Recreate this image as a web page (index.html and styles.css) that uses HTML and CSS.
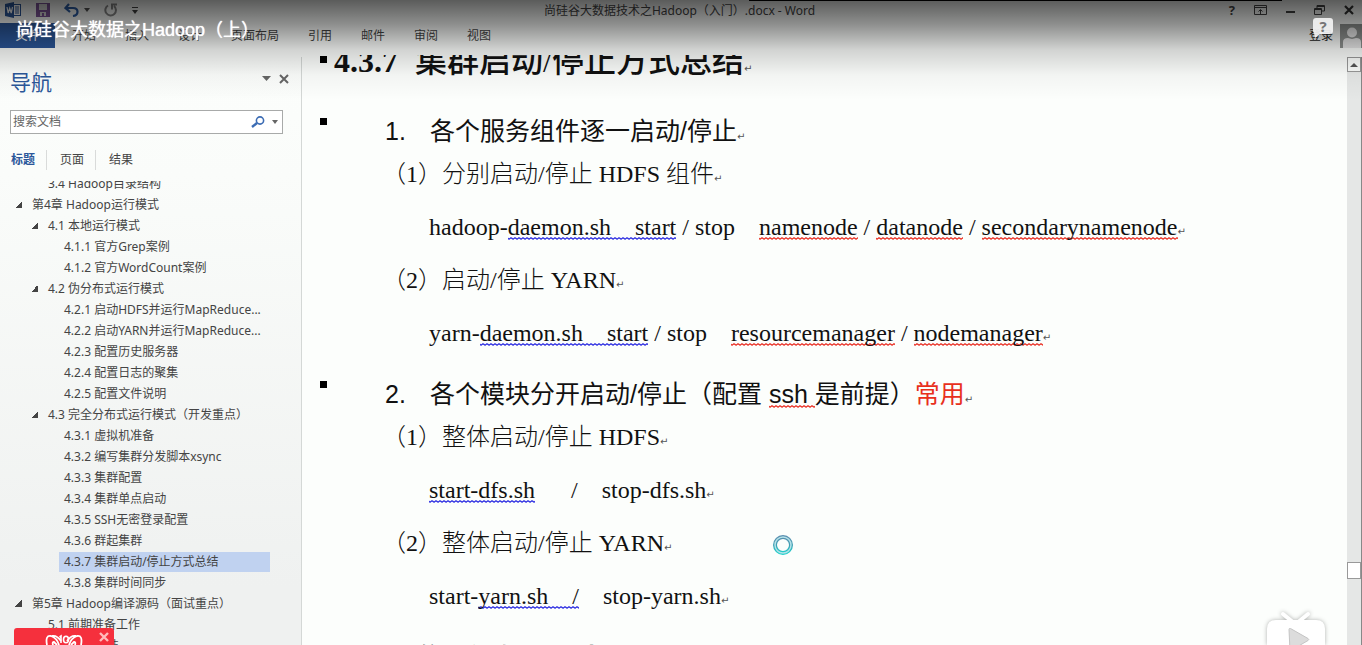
FILE: index.html
```html
<!DOCTYPE html>
<html lang="zh-CN">
<head>
<meta charset="utf-8">
<title>尚硅谷大数据之Hadoop（上）</title>
<link rel="stylesheet" href="styles.css">
</head>
<body>
<div class="player">
  <header class="titlebar">
    <div class="quick">
      <svg class="ic-word" width="17" height="16" viewBox="0 0 17 16"><rect x="8" y="2.500" width="7.500" height="11" fill="#fff" stroke="#2b579a"/><path d="M10 5h4M10 7h4M10 9h4M10 11h4" stroke="#2b579a"/><path d="M0 2l9-2v16l-9-2z" fill="#2b579a"/><path d="M2 5l1.200 6L4.700 6l1.500 5L7.500 5" fill="none" stroke="#fff" stroke-width="1.200"/></svg>
      <button class="plain" aria-label="保存"><svg width="14" height="14" viewBox="0 0 14 14"><path d="M0 0h14v14H0z" fill="#80579b"/><path d="M3 1h8v6H3zM4 9h6v4H8v-3H6v3H4z" fill="#d8d8d8"/></svg></button>
      <button class="plain undo" aria-label="撤消"><svg width="15" height="14" viewBox="0 0 15 14"><path d="M5 1L1.500 5L6 9M2 5h7c6 0 6 7 0 8" fill="none" stroke="#2f5fa5" stroke-width="2.200"/></svg><svg width="6" height="4" viewBox="0 0 6 4"><path d="M0 0h6L3 4z" fill="#555"/></svg></button>
      <button class="plain" aria-label="重复"><svg width="14" height="14" viewBox="0 0 14 14"><path d="M4 2.500a5.300 5.300 0 1 0 6 .500M8 6.500V1.500h5" fill="none" stroke="#8a8a8a" stroke-width="2"/></svg></button>
      <button class="plain" aria-label="自定义"><svg width="6" height="7" viewBox="0 0 6 7"><path d="M0 0h6v1H0zM0 3h6L3 7z" fill="#444"/></svg></button>
    </div>
    <h1 class="doc-name">尚硅谷大数据技术之Hadoop（入门）.docx - Word</h1>
    <div class="window-buttons">
      <button class="plain help" aria-label="帮助">?</button>
      <button class="plain" aria-label="功能区"><svg width="13" height="10" viewBox="0 0 13 10"><path d="M.500.500h12v9H.500zM1 2.500h11M6.500 9V5M4.500 6.500l2-2 2 2" fill="none" stroke="#444"/></svg></button>
      <button class="plain" aria-label="最小化"><svg width="9" height="10" viewBox="0 0 9 10"><path d="M0 6h9v2H0z" fill="#444"/></svg></button>
      <button class="plain" aria-label="还原"><svg width="11" height="10" viewBox="0 0 11 10"><path d="M3 3V.500h7.500V6H8M.500 3.500h7v6h-7zM0 4.500h8M3 1.500h8" fill="none" stroke="#444"/></svg></button>
      <button class="plain" aria-label="关闭"><svg width="10" height="10" viewBox="0 0 10 10"><path d="M1 1l8 8M9 1L1 9" stroke="#333" stroke-width="2.200"/></svg></button>
    </div>
  </header>

  <div class="ribbon">
    <button class="file">文件</button>
    <div class="ribbon-tabs">
      <button>开始</button><button>插入</button><button>设计</button><button>页面布局</button><button>引用</button><button>邮件</button><button>审阅</button><button>视图</button>
    </div>
    <a class="login" href="#">登录</a>
    <svg class="avatar" width="22" height="24" viewBox="0 0 22 24"><path d="M0 0h22v24H0z" fill="#8e918f"/><circle cx="12" cy="8.500" r="5" fill="#e8e8e8"/><path d="M3 24v-6q0-4 5-4l4 1 4-1q5 0 5 4v6z" fill="#e8e8e8"/></svg>
  </div>

  <div class="workspace">
    <aside class="nav">
      <div class="nav-head">
        <h2>导航</h2>
        <button class="plain" aria-label="选项"><svg width="9" height="5" viewBox="0 0 9 5"><path d="M0 0h9L4.500 5z" fill="#666"/></svg></button>
        <button class="plain" aria-label="关闭导航"><svg width="10" height="10" viewBox="0 0 10 10"><path d="M1 1l8 8M9 1L1 9" stroke="#666" stroke-width="2"/></svg></button>
      </div>
      <div class="search">
        <input type="text" placeholder="搜索文档" aria-label="搜索文档">
        <button class="plain" aria-label="搜索"><svg width="14" height="12" viewBox="0 0 14 12"><circle cx="9" cy="4.500" r="3.600" fill="none" stroke="#3c6cb4" stroke-width="1.600"/><path d="M6 7L1 11" stroke="#3c6cb4" stroke-width="2.400"/></svg></button>
        <button class="plain" aria-label="搜索选项"><svg width="6" height="4" viewBox="0 0 6 4"><path d="M0 0h6L3 4z" fill="#666"/></svg></button>
      </div>
      <div class="nav-tabs">
        <button class="active">标题</button><button>页面</button><button>结果</button>
      </div>
      <div class="tree">
        <ul>
          <li class="l2"><a href="#">3.4 Hadoop目录结构</a></li>
          <li class="l1 open"><a href="#">第4章 Hadoop运行模式</a></li>
          <li class="l2 open"><a href="#">4.1 本地运行模式</a></li>
          <li class="l3"><a href="#">4.1.1 官方Grep案例</a></li>
          <li class="l3"><a href="#">4.1.2 官方WordCount案例</a></li>
          <li class="l2 open"><a href="#">4.2 伪分布式运行模式</a></li>
          <li class="l3"><a href="#">4.2.1 启动HDFS并运行MapReduce...</a></li>
          <li class="l3"><a href="#">4.2.2 启动YARN并运行MapReduce...</a></li>
          <li class="l3"><a href="#">4.2.3 配置历史服务器</a></li>
          <li class="l3"><a href="#">4.2.4 配置日志的聚集</a></li>
          <li class="l3"><a href="#">4.2.5 配置文件说明</a></li>
          <li class="l2 open"><a href="#">4.3 完全分布式运行模式（开发重点）</a></li>
          <li class="l3"><a href="#">4.3.1 虚拟机准备</a></li>
          <li class="l3"><a href="#">4.3.2 编写集群分发脚本xsync</a></li>
          <li class="l3"><a href="#">4.3.3 集群配置</a></li>
          <li class="l3"><a href="#">4.3.4 集群单点启动</a></li>
          <li class="l3"><a href="#">4.3.5 SSH无密登录配置</a></li>
          <li class="l3"><a href="#">4.3.6 群起集群</a></li>
          <li class="l3 current"><a href="#">4.3.7 集群启动/停止方式总结</a></li>
          <li class="l3"><a href="#">4.3.8 集群时间同步</a></li>
          <li class="l1 open"><a href="#">第5章 Hadoop编译源码（面试重点）</a></li>
          <li class="l2"><a href="#">5.1 前期准备工作</a></li>
          <li class="l2"><a href="#">5.2 jar包安装</a></li>
        </ul>
      </div>
    </aside>

    <main class="page">
      <div class="content">
        <h2 class="title"><span class="no">4.3.7</span><span class="name">集群启动/停止方式总结<i class="ret">↵</i></span></h2>
        <h3><span class="no">1.</span><span>各个服务组件逐一启动/停止<i class="ret">↵</i></span></h3>
        <p>（1）分别启动/停止 HDFS 组件<i class="ret">↵</i></p>
        <p class="cmd">hadoop-<u class="blue">daemon.sh    start</u> / stop    <u>namenode</u> / <u>datanode</u> / <u>secondarynamenode</u><i class="ret">↵</i></p>
        <p>（2）启动/停止 YARN<i class="ret">↵</i></p>
        <p class="cmd">yarn-<u class="blue">daemon.sh    start</u> / stop    <u>resourcemanager</u> / <u>nodemanager</u><i class="ret">↵</i></p>
        <h3><span class="no">2.</span><span>各个模块分开启动/停止（配置 <u>ssh </u>是前提）<em>常用</em><i class="ret">↵</i></span></h3>
        <p>（1）整体启动/停止 HDFS<i class="ret">↵</i></p>
        <p class="cmd"><u class="blue">start-dfs.sh</u>      /    stop-dfs.sh<i class="ret">↵</i></p>
        <p>（2）整体启动/停止 YARN<i class="ret">↵</i></p>
        <p class="cmd">start-<u class="blue">yarn.sh    /</u>    stop-yarn.sh<i class="ret">↵</i></p>
        <h2 class="title"><span class="no">4.3.8</span><span class="name">集群时间同步<i class="ret">↵</i></span></h2>
      </div>
      <svg class="busy" width="22" height="22" viewBox="0 0 22 22"><defs><linearGradient id="ring" x1="0" y1="0" x2="0" y2="1"><stop offset="0" stop-color="#5a8fb0"/><stop offset=".5" stop-color="#3f9fb4"/><stop offset="1" stop-color="#1fd0cb"/></linearGradient></defs><circle cx="11" cy="11" r="8" fill="none" stroke="url(#ring)" stroke-width="4"/><circle cx="11" cy="11" r="8" fill="none" stroke="#b4e2e8" stroke-width="1.500"/></svg>
    </main>

    <div class="scrollbar">
      <button class="up" aria-label="向上滚动"><svg width="8" height="4" viewBox="0 0 8 4"><path d="M4 0l4 4H0z" fill="#555"/></svg></button>
      <div class="before"></div>
      <div class="thumb"></div>
      <div class="after"></div>
    </div>
  </div>

  <div class="shade"></div>
  <div class="top-line"></div>
  <div class="video-title">尚硅谷大数据之Hadoop（上）</div>
  <button class="feedback" aria-label="反馈"><svg width="22" height="20" viewBox="0 0 22 20"><path d="M4 0h14q3 0 3 3v10q0 3-3 3H8l-5 4-1-5q-1-1-1-2V3q0-3 3-3z" fill="#f2f2f2" fill-opacity=".93"/></svg><span>?</span></button>
  <div class="promo">
    <svg width="40" height="17" viewBox="0 0 40 17"><path d="M3 17Q1 7 7 8q6 2 8 9M37 17q2-10-4-9-6 2-8 9M9 17q-1-3 1-3l3 3M31 17q1-3-1-3l-3 3M8 8q5-1 9 5M32 8q-5-1-9 5" fill="none" stroke="#fff" stroke-width="1.800"/><path d="M15.500 9l1.500-1v7" fill="none" stroke="#fff" stroke-width="1.600"/><ellipse cx="22" cy="11.500" rx="2.500" ry="3.300" fill="none" stroke="#fff" stroke-width="1.600"/></svg>
    <button class="plain" aria-label="关闭广告"><svg width="10" height="10" viewBox="0 0 10 10"><path d="M1 1l8 8M9 1L1 9" stroke="#fbb" stroke-width="2.400"/></svg></button>
  </div>
  <button class="play" aria-label="播放"><svg width="68" height="36" viewBox="0 0 68 36"><g fill="#fff"><path d="M21 5l11 9M46 5l-11 9" stroke="#fff" stroke-width="4" stroke-linecap="round"/><path d="M14 11h40q9 0 9 9v30H5V20q0-9 9-9z"/></g><path d="M27 20.500q0-1.500 1.500-1L46 29.500q1.500 1 0 2L28 42z" fill="#dcdcdc" stroke="#c4c4c4"/></svg></button>
</div>
</body>
</html>
```

FILE: styles.css
```css
* { box-sizing: border-box; }
body {
  margin: 0;
  font: 12px/20px "Noto Sans", "Noto Sans CJK SC", sans-serif;
  color: #444;
}
h1, h2, h3, p, ul { margin: 0; padding: 0; font-weight: normal; }
a { color: inherit; text-decoration: none; }
button { font: inherit; color: inherit; border: 0; padding: 0; background: none; }
svg { display: block; flex: none; }
.plain { display: flex; align-items: center; }

.player {
  position: relative;
  display: flex;
  flex-direction: column;
  height: 100vh;
  overflow: hidden;
  background: #fcfefc;
}

/* Title bar */
.titlebar {
  display: grid;
  grid-template-columns: 1fr auto 1fr;
  align-items: center;
  height: 23px;
  padding: 0 8px 4px 5px;
}
.quick { display: flex; align-items: center; gap: 14px; }
.undo { gap: 5px; }
.doc-name { font-size: 12px; line-height: 19px; }
.window-buttons { display: flex; align-items: center; justify-content: flex-end; gap: 19px; }
.help { font-weight: bold; font-size: 13px; }

/* Ribbon */
.ribbon { display: flex; align-items: center; height: 32px; padding-bottom: 7px; }
.file { align-self: stretch; width: 55px; background: #2b579a; color: #fff; }
.ribbon-tabs { display: flex; flex: 1; gap: 29px; padding-left: 17px; }
.login { padding-right: 7px; color: #222; }

/* Navigation pane */
.workspace { display: flex; flex: 1; min-height: 0; }
.nav {
  display: flex;
  flex-direction: column;
  width: 302px;
  margin-top: 2px;
  border-right: 1px solid #d4d8d6;
  background: linear-gradient(#fcfefc, #fafcfa 20%, #eff1f0 90%);
}
.nav-head { display: flex; align-items: center; gap: 8px; height: 53px; padding: 0 12px 4px 10px; }
.nav-head h2 { flex: 1; font-size: 21px; line-height: 30px; color: #2b579a; }
.nav-head .plain { margin-bottom: 6px; }
.search {
  display: flex;
  align-items: center;
  gap: 7px;
  height: 24px;
  margin: 0 18px 0 10px;
  padding: 0 4px 0 2px;
  border: 1px solid #a8aaa9;
  background: #fff;
}
.search input { flex: 1; min-width: 0; padding: 0; border: 0; outline: 0; background: none; font: inherit; color: #444; }
.search input::placeholder { color: #666; }
.nav-tabs { display: flex; align-items: center; height: 47px; padding: 4px 0 0 11px; }
.nav-tabs button + button { border-left: 1px solid #d9dbda; margin-left: 11px; padding-left: 13px; }
.nav-tabs .active { color: #2b579a; font-weight: bold; }
.tree { flex: 1; min-height: 0; overflow: hidden; }
.tree ul { margin-top: -8px; list-style: none; }
.tree li { display: flex; align-items: center; height: 21px; padding-right: 31px; }
.tree a { flex: 1; padding-left: 5px; white-space: nowrap; }
.tree .l1 { padding-left: 27px; }
.tree .l2 { padding-left: 43px; }
.tree .l3 { padding-left: 59px; }
.open::before {
  content: "";
  width: 7px;
  height: 7px;
  margin-left: -12px;
  margin-right: 5px;
  background: linear-gradient(135deg, transparent 50%, #444 50%);
}
.current a { background: #c0d2f0; }

/* Document */
.page {
  position: relative;
  flex: 1;
  min-width: 0;
  overflow: hidden;
  color: #111;
  font: 24px/53px "Liberation Serif", "Noto Sans CJK SC", serif;
}
.content { margin-top: -15px; }
.content p { padding-left: 80px; font-weight: 300; white-space: pre; }
.content .cmd { padding-left: 127px; }
.content h2, .content h3 { display: flex; white-space: pre; }
.content h2::before, .content h3::before { content: ""; width: 7px; height: 7px; margin: 3px 0 0 18px; background: #000; }
.content h2 { font-size: 32px; line-height: 42px; font-weight: bold; }
.content h2::before { margin-top: 16px; }
.content h2 .no { width: 88px; padding-left: 7px; }
.content h2 .name { font-weight: 500; }
.content h3 { margin-top: 33px; font: 25px/33px "Liberation Sans", "Noto Sans CJK SC", sans-serif; }
.content .cmd + h3 { margin-top: 18px; }
.content h3 .no { width: 103px; padding-left: 58px; }
.content .cmd + h2 { margin-top: 17px; }
u {
  text-decoration: none;
  background: url("data:image/svg+xml,%3Csvg xmlns='http://www.w3.org/2000/svg' width='4' height='3'%3E%3Cpath d='M-1 0L1 2L3 .5L5 2' transform='translate(0 .3)' fill='none' stroke='%23e8281c' stroke-width='1.1'/%3E%3C/svg%3E") 0 100% repeat-x;
}
u.blue {
  background-image: url("data:image/svg+xml,%3Csvg xmlns='http://www.w3.org/2000/svg' width='4' height='3'%3E%3Cpath d='M-1 0L1 2L3 .5L5 2' transform='translate(0 .3)' fill='none' stroke='%232424e0' stroke-width='1.1'/%3E%3C/svg%3E");
}
em { font-style: normal; color: #e8301c; }
.ret { font: 10px/10px "DejaVu Sans", sans-serif; color: #555; }
.busy { position: absolute; left: 470px; top: 479px; }

/* Scroll bar */
.scrollbar {
  display: flex;
  flex-direction: column;
  width: 15px;
  margin-top: 2px;
  background: #e5e7e6;
  border-right: 1px solid #888;
}
.up { display: flex; align-items: center; justify-content: center; height: 15px; border: 1px solid #999; background: #fcfefc; }
.before { flex: 490; }
.thumb { height: 17px; border: 1px solid #999; background: #fff; }
.after { flex: 66; }

/* Player overlay */
.shade {
  position: absolute;
  inset: 0 0 auto;
  height: 100px;
  pointer-events: none;
  background: linear-gradient(rgba(0, 0, 0, .64), rgba(0, 0, 0, .43) 25%, rgba(0, 0, 0, .17) 50%, rgba(0, 0, 0, .04) 75%, transparent);
}
.top-line { position: absolute; top: 0; left: 55%; right: 80px; height: 1px; background: #000; }
.video-title {
  position: absolute;
  left: 16px;
  top: 17px;
  font: 18px/26px "Liberation Sans", "Noto Sans CJK SC", sans-serif;
  color: #fff;
  text-shadow: 0 0 1px #fff;
}
.feedback { position: absolute; right: 28px; top: 18px; }
.feedback span { position: absolute; inset: 0; font: bold 15px/17px "Noto Sans", sans-serif; color: #777; }
.promo {
  position: absolute;
  left: 14px;
  bottom: 0;
  display: flex;
  align-items: center;
  justify-content: flex-end;
  gap: 15px;
  width: 100px;
  height: 17px;
  padding-right: 5px;
  border-radius: 3px 3px 0 0;
  background: #f5303d;
}
.play { position: absolute; right: 32px; bottom: 0; filter: drop-shadow(0 0 2px rgba(0, 0, 0, .3)); }
```
